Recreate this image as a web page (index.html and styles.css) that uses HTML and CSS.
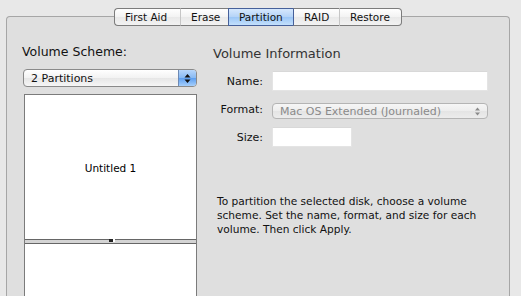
FILE: index.html
```html
<!DOCTYPE html>
<html>
<head>
<meta charset="utf-8">
<link rel="stylesheet" href="styles.css">
</head>
<body>
<div class="window">
  <div class="tabs">
    <div class="tab">First Aid</div>
    <div class="tab">Erase</div>
    <div class="tab selected">Partition</div>
    <div class="tab">RAID</div>
    <div class="tab">Restore</div>
  </div>
  <div class="panel">
    <div class="left">
      <div class="heading">Volume Scheme:</div>
      <div class="popup">
        <span class="popup-label">2 Partitions</span>
        <span class="popup-arrows">
          <svg width="7" height="11" viewBox="0 0 7 11"><path d="M3.5 1 L6.5 4.5 L0.5 4.5 Z M3.5 10 L6.5 6.5 L0.5 6.5 Z" fill="#111"/></svg>
        </span>
      </div>
      <div class="volumes">
        <div class="volume first">Untitled 1</div>
        <div class="divider"><span class="handle"></span></div>
        <div class="volume second"></div>
      </div>
    </div>
    <div class="right">
      <div class="info-title">Volume Information</div>
      <div class="form">
        <div class="label">Name:</div>
        <div class="field"><div class="input wide"></div></div>
        <div class="label">Format:</div>
        <div class="field">
          <div class="select">
            <span>Mac OS Extended (Journaled)</span>
            <svg width="7" height="11" viewBox="0 0 7 11"><path d="M3.5 1.5 L6 4.5 L1 4.5 Z M3.5 9.5 L6 6.5 L1 6.5 Z" fill="#8a8a8a"/></svg>
          </div>
        </div>
        <div class="label">Size:</div>
        <div class="field"><div class="input narrow"></div></div>
      </div>
      <p class="help">To partition the selected disk, choose a volume scheme. Set the name, format, and size for each volume. Then click Apply.</p>
    </div>
  </div>
</div>
</body>
</html>
```
FILE: styles.css
```css
html, body {
  margin: 0;
  padding: 0;
  background: #e8e8e8;
  font-family: "DejaVu Sans", "Lucida Grande", sans-serif;
  color: #111;
  overflow: hidden;
}
.window {
  width: 521px;
  height: 296px;
  padding-top: 8px;
  box-sizing: border-box;
}
.tabs {
  display: flex;
  justify-content: center;
  position: relative;
  z-index: 2;
  height: 18px;
  margin-left: -5px;
}
.tab {
  height: 16px;
  line-height: 16px;
  font-size: 10.5px;
  padding: 0 10px;
  border: 1px solid #7c7c7c;
  border-left: 1px solid #c6c6c6;
  border-right: none;
  background: linear-gradient(#ffffff, #f3f3f3 50%, #e9e9e9 51%, #f2f2f2);
  color: #111;
  white-space: nowrap;
}
.tab:first-child {
  border-left: 1px solid #7c7c7c;
  border-radius: 4px 0 0 4px;
  width: 45px;
}
.tab:last-child {
  border-right: 1px solid #7c7c7c;
  border-radius: 0 4px 4px 0;
  width: 41px;
}
.tab:nth-child(2) { width: 27px; }
.tab:nth-child(3) { width: 44px; }
.tab:nth-child(4) { width: 25px; }
.tab.selected {
  background: linear-gradient(#d6e8fd, #b4d3f7 50%, #9bc6f6 51%, #c3e0fc);
  border-color: #46609a;
  border-left-color: #46609a;
}
.tab.selected + .tab { border-left-color: #46609a; }
.panel {
  margin: -10px 0 0 6px;
  width: 504px;
  height: 280px;
  border: 1px solid #a6a6a6;
  border-bottom: none;
  border-radius: 4px 4px 0 0;
  background: #dfdfdf;
  display: flex;
  padding-top: 27px;
  box-sizing: border-box;
}
.left {
  width: 174px;
  margin-left: 16px;
  display: flex;
  flex-direction: column;
}
.heading {
  font-size: 12.5px;
  height: 16px;
  line-height: 16px;
  color: #111;
  margin-left: -1px;
}
.popup {
  margin-top: 9px;
  height: 16px;
  border: 1px solid #8a8a8a;
  border-radius: 4px;
  background: linear-gradient(#ffffff, #f2f2f2 50%, #e6e6e6 51%, #f6f6f6);
  display: flex;
  align-items: center;
  overflow: hidden;
}
.popup-label {
  flex: 1;
  font-size: 11px;
  padding-left: 7px;
}
.popup-arrows {
  width: 17px;
  height: 16px;
  background: linear-gradient(#b7d6fb, #87b9f3 50%, #5c9ef0 51%, #a6cffb);
  border-left: 1px solid #6d89b4;
  display: flex;
  align-items: center;
  justify-content: center;
}
.volumes {
  margin-top: 7px;
  margin-left: 1px;
  flex: 1;
  border: 1px solid #7b7b7b;
  border-bottom: none;
  background: #fff;
  display: flex;
  flex-direction: column;
}
.volume.first {
  height: 144px;
  display: flex;
  align-items: center;
  justify-content: center;
  font-size: 10.5px;
  color: #000;
  padding-top: 2px;
  box-sizing: border-box;
}
.divider {
  height: 3px;
  border-top: 1px solid #666;
  border-bottom: 1px solid #666;
  background: #d4d4d4;
  position: relative;
}
.handle {
  position: absolute;
  left: 84px;
  top: -1px;
  width: 4px;
  height: 3px;
  background: #222;
  border-right: 2px solid #fff;
}
.volume.second { flex: 1; }
.right {
  margin-left: 16px;
  width: 276px;
}
.info-title {
  font-size: 13px;
  color: #333;
  height: 17px;
  line-height: 17px;
  margin-top: 1px;
}
.form {
  display: grid;
  grid-template-columns: 50px 216px;
  column-gap: 9px;
  row-gap: 9px;
  margin-top: 9px;
}
.label {
  font-size: 11px;
  text-align: right;
  align-self: center;
  color: #111;
}
.input {
  height: 18px;
  background: #fff;
  border: 1px solid #e4e4e4;
  border-top-color: #d8d8d8;
}
.input.wide { width: 214px; }
.input.narrow { width: 78px; height: 18px; }
.select {
  height: 14px;
  border: 1px solid #b4b4b4;
  border-radius: 4px;
  background: linear-gradient(#f6f6f6, #ededed 50%, #e4e4e4 51%, #ececec);
  display: flex;
  align-items: center;
  justify-content: space-between;
  padding: 0 6px 0 7px;
  width: 201px;
  font-size: 11px;
  color: #8a8a8a;
  margin: 3px 0 -1px;
}
.help {
  margin: 47px 0 0 4px;
  font-size: 10.6px;
  line-height: 14px;
  color: #111;
  width: 266px;
}
```
